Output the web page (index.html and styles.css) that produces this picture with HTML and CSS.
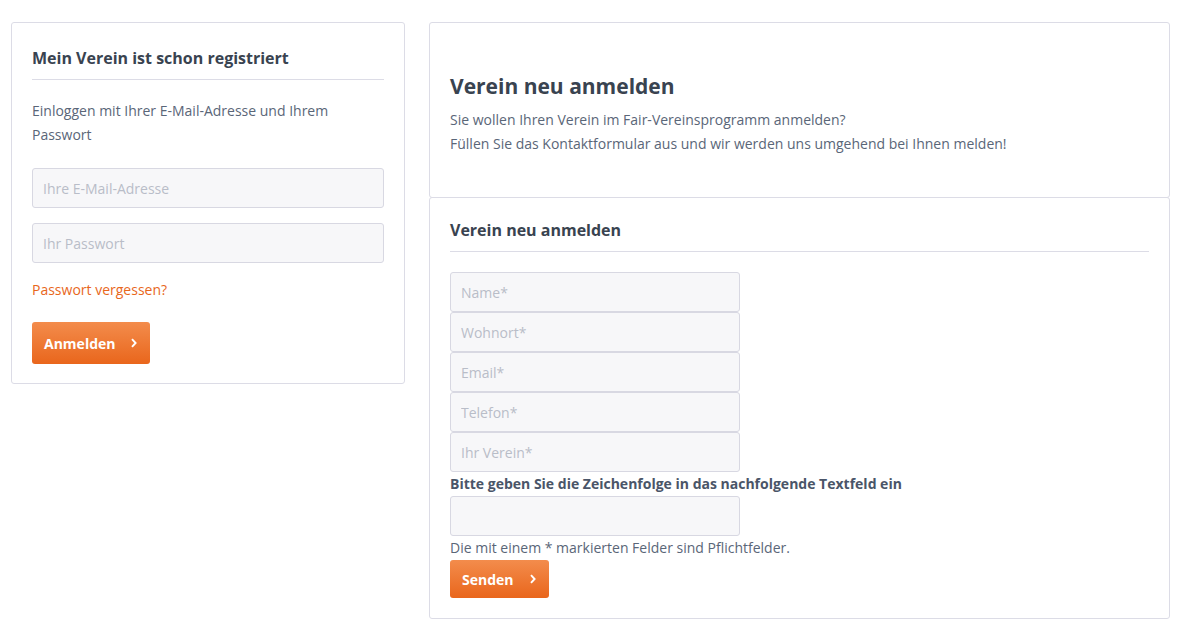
FILE: index.html
```html
<!DOCTYPE html>
<html lang="de">
<head>
    <meta charset="UTF-8">
    <title>Verein anmelden</title>
    <link rel="stylesheet" href="styles.css">
</head>
<body>
    <div class="page">
        <div class="box login">
            <h3 class="box-title">Mein Verein ist schon registriert</h3>
            <p class="intro">Einloggen mit Ihrer E-Mail-Adresse und Ihrem Passwort</p>
            <input class="field" type="text" placeholder="Ihre E-Mail-Adresse">
            <input class="field" type="password" placeholder="Ihr Passwort">
            <a class="forgot" href="#">Passwort vergessen?</a>
            <button class="btn">Anmelden
                <svg width="6" height="10" viewBox="0 0 6 10"><path d="M1 1.2 L4.6 5 L1 8.8" fill="none" stroke="#fff" stroke-width="1.9"/></svg>
            </button>
        </div>
        <div class="right">
            <div class="box info">
                <h2>Verein neu anmelden</h2>
                <p>Sie wollen Ihren Verein im Fair-Vereinsprogramm anmelden?<br>Füllen Sie das Kontaktformular aus und wir werden uns umgehend bei Ihnen melden!</p>
            </div>
            <div class="box register">
                <h3 class="box-title">Verein neu anmelden</h3>
                <div class="stack">
                    <input class="field" type="text" placeholder="Name*">
                    <input class="field" type="text" placeholder="Wohnort*">
                    <input class="field" type="text" placeholder="Email*">
                    <input class="field" type="text" placeholder="Telefon*">
                    <input class="field" type="text" placeholder="Ihr Verein*">
                </div>
                <label class="captcha-label">Bitte geben Sie die Zeichenfolge in das nachfolgende Textfeld ein</label>
                <input class="field captcha" type="text">
                <p class="note">Die mit einem * markierten Felder sind Pflichtfelder.</p>
                <button class="btn">Senden
                    <svg width="6" height="10" viewBox="0 0 6 10"><path d="M1 1.2 L4.6 5 L1 8.8" fill="none" stroke="#fff" stroke-width="1.9"/></svg>
                </button>
            </div>
        </div>
    </div>
</body>
</html>
```

FILE: styles.css
```css
body {
    margin: 0;
    background: #fff;
    font-family: "Open Sans", "Liberation Sans", sans-serif;
    color: #5a6678;
}
.page {
    display: flex;
    align-items: flex-start;
    gap: 24px;
    padding: 22px 13px 0 11px;
}
.box {
    border: 1px solid #dcdce6;
    border-radius: 3px;
    background: #fff;
}
.login {
    width: 352px;
    flex: none;
    padding: 24px 20px 19px;
    display: flex;
    flex-direction: column;
    align-items: flex-start;
}
.box-title {
    margin: 0;
    align-self: stretch;
    font-size: 16px;
    line-height: 22px;
    font-weight: 700;
    color: #394350;
    padding-bottom: 10px;
    border-bottom: 1px solid #dcdce6;
}
.intro {
    margin: 19px 0 0;
    font-size: 14px;
    line-height: 24px;
}
.field {
    box-sizing: border-box;
    display: block;
    height: 40px;
    width: 100%;
    margin: 0;
    padding: 0 10px;
    border: 1px solid #d8d8e2;
    border-radius: 3px;
    background: #f7f7f9;
    font-family: inherit;
    font-size: 14px;
    color: #394350;
}
.field::placeholder {
    color: #b9bdc8;
}
.login .field {
    margin-top: 21px;
}
.login .field + .field {
    margin-top: 15px;
}
.forgot {
    margin-top: 15px;
    font-size: 14px;
    line-height: 24px;
    color: #e8671c;
    text-decoration: none;
}
.btn {
    display: flex;
    align-items: center;
    gap: 16px;
    height: 42px;
    margin-top: 20px;
    padding: 0 13px 0 12px;
    border: none;
    border-radius: 3px;
    background: linear-gradient(#f38c4c, #e9661c);
    color: #fff;
    font-family: inherit;
    font-size: 14px;
    font-weight: 700;
    cursor: pointer;
}
.right {
    flex: 1;
    display: flex;
    flex-direction: column;
}
.info {
    padding: 48px 20px 41px;
}
.info h2 {
    margin: 0;
    font-size: 21px;
    line-height: 30px;
    font-weight: 700;
    color: #394350;
}
.info p {
    margin: 7px 0 0;
    font-size: 14px;
    line-height: 24px;
}
.register {
    margin-top: -1px;
    padding: 21px 20px 20px;
}
.stack {
    margin-top: 20px;
    width: 290px;
}
.captcha-label {
    display: block;
    margin-top: 2px;
    font-size: 14px;
    line-height: 20px;
    font-weight: 700;
    color: #4a5568;
}
.captcha {
    width: 290px;
    margin-top: 2px;
}
.note {
    margin: 2px 0 0;
    font-size: 14px;
    line-height: 20px;
}
.register .btn {
    height: 38px;
    margin-top: 2px;
}
```
